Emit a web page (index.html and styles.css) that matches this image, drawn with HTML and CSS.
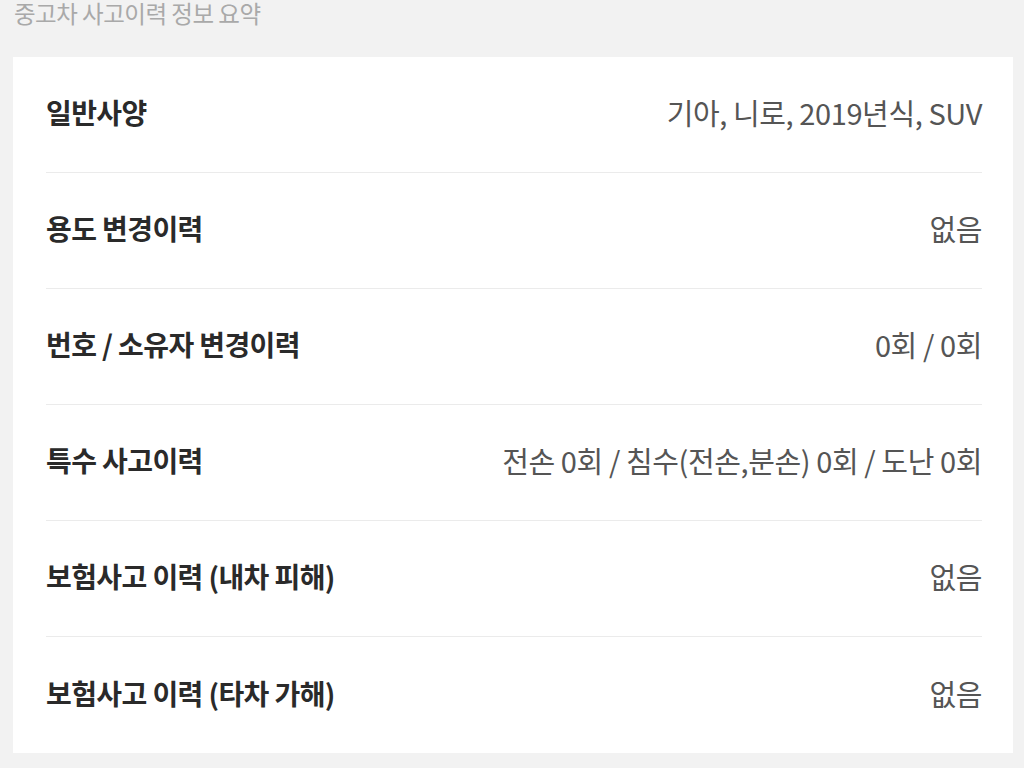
FILE: index.html
```html
<html>

<head>
	<link rel="stylesheet" href="styles.css">
</head>

<body>
	<h2 class="title">중고차 사고이력 정보 요약</h2>
	<div class="card">
		<div class="row">
			<span class="label">일반사양</span>
			<span class="value">기아, 니로, 2019년식, SUV</span>
		</div>
		<div class="row">
			<span class="label">용도 변경이력</span>
			<span class="value">없음</span>
		</div>
		<div class="row">
			<span class="label">번호 / 소유자 변경이력</span>
			<span class="value">0회 / 0회</span>
		</div>
		<div class="row">
			<span class="label">특수 사고이력</span>
			<span class="value">전손 0회 / 침수(전손,분손) 0회 / 도난 0회</span>
		</div>
		<div class="row">
			<span class="label">보험사고 이력 (내차 피해)</span>
			<span class="value">없음</span>
		</div>
		<div class="row">
			<span class="label">보험사고 이력 (타차 가해)</span>
			<span class="value">없음</span>
		</div>
	</div>
</body>

</html>
```

FILE: styles.css
```css
body {
	margin: 0;
	padding: 0 11px 0 13px;
	background-color: #f2f2f2;
	font-family: "Noto Sans CJK KR", "Noto Sans", sans-serif;
	overflow: hidden;
}

.title {
	margin: 0 0 0 1px;
	height: 57px;
	font-size: 23.5px;
	line-height: 27px;
	font-weight: 400;
	color: #a9a9a9;
	letter-spacing: -0.5px;
}

.card {
	background-color: #fff;
	padding: 0 31px 0 33px;
}

.row {
	display: flex;
	justify-content: space-between;
	align-items: center;
	box-sizing: border-box;
	height: 116px;
	padding-bottom: 5px;
	border-bottom: 1px solid #ebebeb;
	letter-spacing: -0.6px;
}

.row:last-child {
	border-bottom: none;
}

.label {
	font-size: 28px;
	font-weight: 700;
	color: #2a2a2a;
}

.value {
	font-size: 29px;
	letter-spacing: -0.4px;
	color: #555;
}
```
